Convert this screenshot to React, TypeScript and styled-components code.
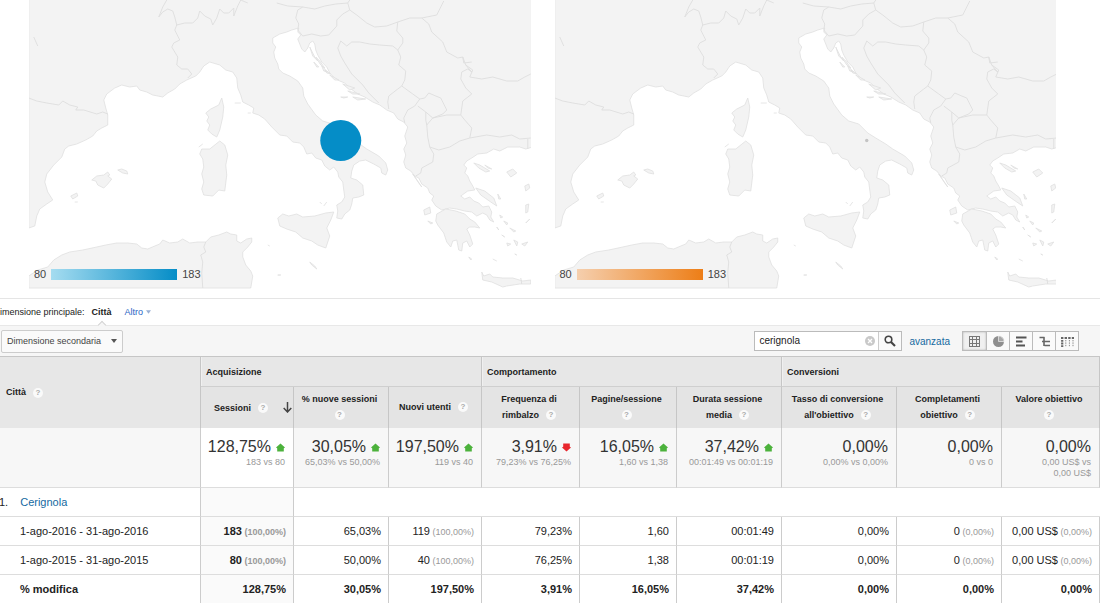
import React, { useId } from 'react';
import styled, { createGlobalStyle, css } from 'styled-components';

const GlobalStyle = createGlobalStyle`
  *, *::before, *::after { box-sizing: border-box; }
  body {
    margin: 0;
    background: #fff;
    color: #222;
    font-family: "Liberation Sans", Arial, sans-serif;
    font-size: 11px;
    overflow-x: hidden;
  }
  button, input, select { font-family: inherit; color: inherit; }
`;

/* ---------- Maps ---------- */

const Maps = styled.section`
  display: grid;
  grid-template-columns: 1fr 1fr;
  gap: 24px;
  height: 298px;
  padding: 0 44px 0 29px;
`;

const MapPanel = styled.figure`
  position: relative;
  margin: 0;
  height: 290px;
`;

const MapSvg = styled.svg`
  display: block;
  width: 100%;
  height: 100%;
`;

const Legend = styled.figcaption`
  position: absolute;
  left: 5px;
  bottom: 10px;
  display: flex;
  align-items: center;
  gap: 5px;
  line-height: 12px;
  color: #444;
`;

const Scale = styled.span<{ $from: string; $to: string }>`
  width: 126px;
  height: 11px;
  background: linear-gradient(to right, ${p => p.$from}, ${p => p.$to});
`;

const LAND = [
  'M29 -2H533V147L526 149L520 147L508 147L500 151L494 149L487 153L478 154L472 158L467 161L464 165L467 168L465 173L468 176L470 181L473 186L475 190L468 191L461 196L465 199L470 197L474 201L479 203L483 207L489 206L492 212L491 217L494 222L490 220L487 215L483 213L477 216L472 212L465 211L457 209L450 208L442 210L436 206L432 200L434 196L430 193L428 188L422 184L419 178L415 176L411 171L406 168L404 162L406 155L404 149L407 143L405 136L408 127L404 122L398 119L394 113L387 110L380 105L373 102L365 97L358 94L350 88L345 83L340 81L335 78L330 73L327 67L322 62L318 55L316 50L315 44L313 41L310 43L308 48L305 52L302 49L300 44L298 39L301 35L298 32L299 28L292 30L287 32L280 34L273 38L273 43L276 47L274 52L275 58L278 64L279 69L283 73L290 76L298 81L303 88L304 96L308 104L316 115L323 121L333 124L338 129L342 133L350 138L360 144L367 149L379 156L386 163L388 170L386 175L382 173L381 168L374 164L366 160L360 161L354 165L352 171L351 178L357 180L363 185L364 195L359 197L353 198L352 204L350 210L345 214L342 219L337 218L338 211L337 205L342 202L345 197L344 190L343 182L339 177L338 172L334 167L330 170L325 166L322 160L316 158L312 153L307 154L304 147L300 143L293 142L287 136L280 135L272 127L265 119L259 115L253 113L254 108L249 105L243 102L241 95L238 88L237 78L233 72L226 70L220 65L210 62L204 66L200 72L196 76L187 80L180 84L175 89L168 93L163 97L153 95L147 92L140 90L137 86L130 87L122 85L115 88L107 94L104 100L106 108L108 115L108 125L102 128L97 131L93 136L86 140L77 144L69 146L65 149L62 157L54 165L47 174L45 182L48 192L53 200L47 204L40 209L37 216L35 226L29 228Z',
  'M222 98L224 107L223 117L220 130L217 137L212 134L208 130L210 125L207 121L209 117L206 113L211 109L219 105Z',
  'M220 141L225 145L228 155L226 165L227 175L225 191L219 190L213 196L204 195L202 189L204 182L202 174L204 167L203 159L200 154L202 149L210 149Z',
  'M278 218L283 214L289 216L297 214L303 217L315 216L326 213L334 212L331 220L327 228L330 236L326 248L318 245L312 241L303 238L296 232L287 229L280 226Z',
  'M437 214L446 209L456 211L465 214L470 219L475 222L480 228L475 227L470 227L467 229L470 235L473 244L470 247L467 241L463 243L462 251L459 250L457 240L453 241L451 247L447 242L444 233L438 225L436 221Z',
  'M482 272L484 276L490 274L493 277L503 278L513 278L523 281L531 280V284L520 284L507 286L503 287L492 282L483 280Z',
  'M92 180L97 176L104 175L108 172L110 175L108 176L112 179L108 184L104 188L98 185L96 181Z',
  'M118 170L122 169L127 171L128 174L123 173Z',
  'M71 196L77 193L78 196L73 199Z',
  'M29 276L38 270L48 267L54 260L62 255L70 252L83 250L97 247L106 245L117 243L128 243L137 244L142 248L148 249L155 246L160 244L163 240L170 243L178 242L183 239L190 243L198 242L206 242L211 237L219 235L227 232L231 234L237 235L237 241L241 243L247 239L252 238L252 242L248 247L243 252L243 257L246 265L251 271L253 276L251 288H29Z',
  'M474 163L480 165L490 171L486 172L479 168Z M485 165L492 169L488 168Z M507 172L513 169L517 173L511 177Z M498 194L501 199L499 199Z M525 186L529 184L530 188L526 191Z M526 205L529 204L528 212L526 213Z M413 174L418 181L422 187L419 183Z M424 210L430 207L431 213L425 215Z M428 221L433 223L431 224Z M476 188L485 191L494 198L497 206L491 202L481 195Z M500 215L503 217L501 218Z M504 221L508 223L507 225Z M510 228L516 231L514 232Z M497 227L499 230Z M502 235L505 237Z M507 243L511 244L508 246Z M522 244L528 242L525 246Z M514 240L518 242L517 246Z M515 254L517 255Z M526 223L530 219Z M469 257L472 259L471 260Z',
  'M310 262L315 266L317 269L312 265Z M278 275L281 275Z M320 202L322 204 M324 206L327 202 M268 245L270 246 M75 202L78 202 M199 147L203 144 M235 103L241 103 M248 113L251 113 M493 259L497 261',
  'M310 47L315 57L318 61L313 56Z M316 57L320 61L325 68L321 65Z M314 62L319 67L317 67Z M322 66L328 72L324 71Z M325 70L331 74L327 73Z M330 75L339 80L335 80Z M343 84L355 88L350 90Z M341 97L348 97L344 98Z M353 97L366 99L358 100Z M348 91L360 94L353 94Z',
];

const BORDERS = [
  'M29 98L37 101L47 103L59 105L63 101L70 105L78 107L76 110L84 110L97 114L103 112L108 114',
  'M188 78L192 74L188 69L182 69L177 65L178 57L172 47L174 43L180 40L175 30L177 25L185 23L193 23L198 18L200 11L205 16L211 19L213 25L217 18L220 9L224 13L229 13L234 8L234 16L238 6L241 0',
  'M177 25L175 17L173 11L168 9L163 12L159 17L163 7L167 0',
  'M241 0L248 3M277 3L288 6L303 7L315 9L325 6L336 4L348 3L350 0M348 3L350 10L357 15L367 23L375 27L387 26L398 22L410 18L422 18L437 15L441 7L444 1',
  'M298 10L296 18L299 24L298 30L303 36L312 34L321 36L329 35L337 26L337 20L343 14L350 10M298 10L303 7',
  'M398 22L397 31L403 38L403 43L398 50L393 46L380 45L370 44L360 42L352 42L347 46L341 41L338 48L341 56L345 63L352 74L363 85L369 93L379 103',
  'M398 50L401 57L399 65L406 71L405 80L402 86L398 89L389 96L388 102L389 109M402 86L413 94L420 99L415 106L408 110L404 118L405 123M420 99L425 98L429 93L436 96L441 98L447 110L443 114L433 118L426 112L418 106',
  'M422 18L429 24L432 32L443 42L447 52L458 58L463 57L466 65L472 72L468 69L462 72L461 79L466 88L472 94L463 101L462 108L461 115L447 115L433 118L427 125L428 137L430 147L439 150L450 147L460 141L470 138L472 128L465 120L461 115M426 112L426 120L427 125',
  'M466 65L473 70L470 77L482 79L493 77L507 81L518 81L525 77L531 74M470 138L487 135L500 137L512 135L520 139L531 138M430 147L434 154L433 162L422 168L421 173L416 176M528 139L528 149',
  'M206 242L204 247L206 252L201 255L203 262L202 273L203 288M34 37L38 46M463 57L464 63L472 62M521 278L522 284',
];

interface MapProps {
  low: string;
  high: string;
  bubble?: string;
  label: string;
}

function RegionMap({ low, high, bubble, label }: MapProps) {
  return (
    <MapPanel>
      <MapSvg viewBox="29 0 502 290" preserveAspectRatio="xMidYMid slice" role="img" aria-label={label}>
        <g fill="#f3f3f3" stroke="#e0e0e0" strokeWidth="0.8" strokeLinejoin="round">
          {LAND.map(d => <path key={d} d={d} />)}
        </g>
        <g fill="none" stroke="#dedede" strokeWidth="0.9" strokeLinejoin="round">
          {BORDERS.map(d => <path key={d} d={d} />)}
        </g>
        {bubble
          ? <circle cx="341" cy="140.5" r="20.5" fill={bubble} />
          : <circle cx="341" cy="140.5" r="1.7" fill="#c4c4c4" />}
      </MapSvg>
      <Legend>
        <span>80</span>
        <Scale $from={low} $to={high} />
        <span>183</span>
      </Legend>
    </MapPanel>
  );
}

/* ---------- Dimension bar and toolbar ---------- */

const DimensionBar = styled.nav`
  display: flex;
  align-items: center;
  height: 27px;
  border-top: 1px solid #e5e5e5;
  font-size: 9px;
`;

const DimensionLabel = styled.span`
  white-space: nowrap;
`;

const CurrentDimension = styled.b`
  position: relative;
  margin-left: 7px;
  &::after {
    content: '';
    position: absolute;
    z-index: 1;
    left: 7px;
    top: 15px;
    width: 6px;
    height: 6px;
    border: 1px solid #d4d4d4;
    border-width: 1px 0 0 1px;
    background: #f6f6f6;
    transform: rotate(45deg);
  }
`;

const MoreButton = styled.button`
  display: flex;
  align-items: center;
  gap: 3px;
  margin-left: 13px;
  padding: 0;
  border: 0;
  background: none;
  color: #2a66c4;
  font-size: 9px;
`;

const Toolbar = styled.div`
  display: flex;
  align-items: center;
  height: 31px;
  padding: 0 21px 0 1px;
  background: #f6f6f6;
  border-top: 1px solid #e8e8e8;
`;

const SelectWrap = styled.span`
  position: relative;
  margin-right: auto;
  svg {
    position: absolute;
    right: 6px;
    top: 9px;
    pointer-events: none;
  }
`;

const SecondarySelect = styled.select`
  appearance: none;
  display: block;
  width: 122px;
  height: 23px;
  padding: 0 0 0 5px;
  border: 1px solid #ccc;
  border-radius: 2px;
  background: #fafafa;
  color: #444;
  font-size: 9px;
`;

const Search = styled.form`
  display: flex;
  width: 148px;
  height: 20px;
  border: 1px solid #bbb;
  background: #fff;
`;

const SearchInput = styled.input`
  flex: 1;
  min-width: 0;
  padding: 0 4px 1px;
  border: 0;
  background: none;
  font-size: 10px;
  outline: 0;
`;

const IconButton = styled.button<{ $width: number; $divided?: boolean }>`
  display: grid;
  place-items: center;
  width: ${p => p.$width}px;
  padding: 0;
  border: 0;
  background: none;
  ${p => p.$divided && css`
    border-left: 1px solid #ccc;
    background: #fafafa;
  `}
`;

const AdvancedLink = styled.a`
  margin: 0 12px 0 7px;
  color: #15699f;
  font-size: 10px;
  text-decoration: none;
`;

const ViewGroup = styled.div`
  display: flex;
  height: 20px;
  border: 1px solid #bbb;
`;

const ViewButton = styled.button<{ $active?: boolean }>`
  display: grid;
  place-items: center;
  width: 23px;
  padding: 0;
  border: 0;
  background: ${p => (p.$active ? '#f0f0f0' : '#fafafa')};
  box-shadow: ${p => (p.$active ? 'inset 0 0 2px #aaa' : 'none')};
  & + & { border-left: 1px solid #bbb; }
`;

const Caret = ({ small }: { small?: boolean }) => (
  <svg width={small ? 5 : 6} height="4" viewBox="0 0 6 4" aria-hidden="true">
    <path d="M0 0H6L3 4Z" fill={small ? '#9ab0d4' : '#555'} />
  </svg>
);

const VIEW_ICONS: { name: string; drawing: React.ReactNode }[] = [
  {
    name: 'Dati',
    drawing: <path d="M1 1.5H12M1 4.5H12M1 8.5H12M1 11.5H12M1.5 1V12M4.5 1V12M8.5 1V12M11.5 1V12" stroke="#777" fill="none" />,
  },
  {
    name: 'Percentuale',
    drawing: (
      <>
        <circle cx="6.5" cy="6.5" r="5.5" fill="#8f8f8f" />
        <path d="M6.5 6.5V1A5.5 5.5 0 0 1 12 6.5Z" fill="#a8a8a8" stroke="#e4e4e4" strokeWidth="0.8" />
      </>
    ),
  },
  { name: 'Rendimento', drawing: <path d="M1 2.5H11.5M1 6.5H7.500M1 10.5H10" stroke="#555" strokeWidth="2.2" fill="none" /> },
  {
    name: 'Confronto',
    drawing: <path d="M1.500 2.5H6.500M4 6.500H12M6.500 10.5H12M6 2V11" stroke="#666" strokeWidth="1.6" fill="none" />,
  },
  {
    name: 'Pivot',
    drawing: (
      <>
        <path d="M0 3H13" stroke="#666" strokeWidth="2" strokeDasharray="2.4 1.2" />
        <path d="M1.200 5V12" stroke="#666" strokeWidth="2.2" strokeDasharray="1.800 0.800" />
        <path d="M4.8 5V12M8.4 5V12M12 5V12" stroke="#8a8a8a" strokeDasharray="1.400 1" />
      </>
    ),
  },
];

/* ---------- Data table ---------- */

const Table = styled.table`
  width: 100%;
  table-layout: fixed;
  border-collapse: separate;
  border-spacing: 0;
  border-top: 1px solid #c6c6c6;
`;

const GroupHead = styled.th`
  height: 30px;
  padding: 0 5px;
  border-right: 1px solid #c6c6c6;
  border-bottom: 1px solid #cfcfcf;
  background: #e7e7e7;
  box-shadow: inset 1px 0 #f0f0f0;
  font-size: 9px;
  text-align: left;
`;

const DimensionHead = styled(GroupHead)`
  padding: 0 6px;
  border-bottom: 0;
  box-shadow: none;
`;

const MetricHead = styled.th`
  height: 41px;
  padding: 0 5px 2px 2px;
  border-right: 1px solid #c6c6c6;
  background: #e4e4e4;
  font-size: 9px;
  line-height: 16px;
  text-align: center;
  white-space: nowrap;
`;

const SortedHead = styled.div`
  display: flex;
  align-items: center;
  justify-content: space-between;
  padding: 2px 0 0 11px;
  margin-right: -4px;
`;

const HelpMark = styled.span<{ $spaced?: boolean }>`
  display: inline-block;
  width: 10px;
  height: 10px;
  margin-left: ${p => (p.$spaced ? 7 : 0)}px;
  border-radius: 50%;
  background: #fafafa;
  color: #aaa;
  font-size: 8px;
  line-height: 10px;
  text-align: center;
  vertical-align: middle;
`;

const SummaryCell = styled.td<{ $sorted?: boolean }>`
  height: 60px;
  padding: 9px 8px 0 0;
  border-right: 1px solid #ccc;
  border-bottom: 1px solid #ddd;
  background: ${p => (p.$sorted ? '#fff' : '#f7f7f7')};
  color: #999;
  font-size: 9px;
  line-height: 11px;
  text-align: right;
  vertical-align: top;
`;

const Change = styled.div`
  display: flex;
  align-items: center;
  justify-content: flex-end;
  gap: 5px;
  color: #333;
  font-size: 16px;
  line-height: 20px;
  white-space: nowrap;
`;

const Row = styled.tr<{ $last?: boolean }>`
  --line: ${p => (p.$last ? '0' : '1px')};
  height: ${p => (p.$last ? 28 : 29)}px;
  font-weight: ${p => (p.$last ? 'bold' : 'normal')};
`;

const NameCell = styled.th`
  padding: 0 0 0 20px;
  border-right: 1px solid #ccc;
  border-bottom: var(--line) solid #ddd;
  font-weight: inherit;
  text-align: left;
  white-space: nowrap;
`;

const RankedName = styled.div`
  display: flex;
  margin-left: -21px;
  gap: 12px;
`;

const CityLink = styled.a`
  color: #15699f;
  text-decoration: none;
`;

const ValueCell = styled.td<{ $sorted?: boolean }>`
  padding: 0 7px 0 0;
  border-right: 1px solid #ccc;
  border-bottom: var(--line) solid #ddd;
  background: ${p => (p.$sorted ? '#fafafa' : '#fff')};
  font-weight: ${p => (p.$sorted ? 'bold' : 'inherit')};
  text-align: right;
  white-space: nowrap;
`;

const EmptyCell = styled.td`
  border-bottom: 1px solid #ddd;
`;

const Share = styled.span`
  color: #999;
  font-size: 9px;
`;

const Trend = ({ down }: { down?: boolean }) => (
  <svg width="9" height="9" viewBox="0 0 9 9" role="img" aria-label={down ? 'In calo' : 'In aumento'}>
    <path
      d={down ? 'M4.5 8.500L0 4.500L1.200 3.800V0.500H7.800V3.800L9 4.500Z' : 'M4.5 0.500L9 4.500L7.800 5.200V8.500H1.200V5.200L0 4.500Z'}
      fill={down ? '#e8262d' : '#4cb23c'}
    />
  </svg>
);

interface Metric {
  head: string[];
  change: string;
  compare: string[];
  trend?: 'up' | 'down';
  current: [string, string?];
  previous: [string, string?];
}

const METRICS: Metric[] = [
  { head: ['Sessioni'], change: '128,75%', compare: ['183 vs 80'], trend: 'up', current: ['183', '(100,00%)'], previous: ['80', '(100,00%)'] },
  { head: ['% nuove sessioni', ''], change: '30,05%', compare: ['65,03% vs 50,00%'], trend: 'up', current: ['65,03%'], previous: ['50,00%'] },
  { head: ['Nuovi utenti'], change: '197,50%', compare: ['119 vs 40'], trend: 'up', current: ['119', '(100,00%)'], previous: ['40', '(100,00%)'] },
  { head: ['Frequenza di', 'rimbalzo'], change: '3,91%', compare: ['79,23% vs 76,25%'], trend: 'down', current: ['79,23%'], previous: ['76,25%'] },
  { head: ['Pagine/sessione', ''], change: '16,05%', compare: ['1,60 vs 1,38'], trend: 'up', current: ['1,60'], previous: ['1,38'] },
  { head: ['Durata sessione', 'media'], change: '37,42%', compare: ['00:01:49 vs 00:01:19'], trend: 'up', current: ['00:01:49'], previous: ['00:01:19'] },
  { head: ['Tasso di conversione', "all'obiettivo"], change: '0,00%', compare: ['0,00% vs 0,00%'], current: ['0,00%'], previous: ['0,00%'] },
  { head: ['Completamenti', 'obiettivo'], change: '0,00%', compare: ['0 vs 0'], current: ['0', '(0,00%)'], previous: ['0', '(0,00%)'] },
  { head: ['Valore obiettivo', ''], change: '0,00%', compare: ['0,00 US$ vs', '0,00 US$'], current: ['0,00 US$', '(0,00%)'], previous: ['0,00 US$', '(0,00%)'] },
];

const COLUMN_WEIGHTS = [201, 93, 95, 93, 98, 97, 105, 115, 105, 98];
const TOTAL_WEIGHT = COLUMN_WEIGHTS.reduce((sum, w) => sum + w, 0);

function HeadText({ lines }: { lines: string[] }) {
  const last = lines[lines.length - 1];
  return (
    <>
      {lines.slice(0, -1).map(line => <div key={line}>{line}</div>)}
      <div>{last}<HelpMark $spaced={last !== ''}>?</HelpMark></div>
    </>
  );
}

function PeriodRow({ name, period }: { name: string; period: 'current' | 'previous' }) {
  return (
    <Row>
      <NameCell scope="row">{name}</NameCell>
      {METRICS.map((m, i) => {
        const [value, share] = m[period];
        return (
          <ValueCell key={m.head[0]} $sorted={i === 0}>
            {value}{share && <Share> {share}</Share>}
          </ValueCell>
        );
      })}
    </Row>
  );
}

export default function App() {
  const searchId = useId();
  return (
    <>
      <GlobalStyle />
      <main>
        <Maps>
          <RegionMap low="#a5dcf0" high="#058dc7" bubble="#058dc7" label="Sessioni per città, agosto 2016" />
          <RegionMap low="#f5cfae" high="#ed7e17" label="Sessioni per città, agosto 2015" />
        </Maps>

        <DimensionBar>
          <DimensionLabel>imensione principale:</DimensionLabel>
          <CurrentDimension>Città</CurrentDimension>
          <MoreButton type="button">Altro <Caret small /></MoreButton>
        </DimensionBar>

        <Toolbar>
          <SelectWrap>
            <SecondarySelect aria-label="Dimensione secondaria">
              <option>Dimensione secondaria</option>
            </SecondarySelect>
            <Caret />
          </SelectWrap>
          <Search role="search" onSubmit={e => e.preventDefault()}>
            <SearchInput id={searchId} type="text" defaultValue="cerignola" aria-label="Cerca" />
            <IconButton type="reset" $width={16} aria-label="Cancella">
              <svg width="10" height="10" viewBox="0 0 10 10">
                <circle cx="5" cy="5" r="5" fill="#c9c9c9" />
                <path d="M3 3L7 7M7 3L3 7" stroke="#fff" strokeWidth="1.3" />
              </svg>
            </IconButton>
            <IconButton type="submit" $width={23} $divided aria-label="Avvia ricerca">
              <svg width="12" height="12" viewBox="0 0 12 12">
                <circle cx="4.5" cy="4.5" r="3.3" fill="none" stroke="#444" strokeWidth="1.6" />
                <path d="M7 7L11 11" stroke="#444" strokeWidth="2.2" />
              </svg>
            </IconButton>
          </Search>
          <AdvancedLink href="#avanzata">avanzata</AdvancedLink>
          <ViewGroup>
            {VIEW_ICONS.map((icon, i) => (
              <ViewButton key={icon.name} type="button" $active={i === 0} aria-label={icon.name}>
                <svg width="13" height="13" viewBox="0 0 13 13">{icon.drawing}</svg>
              </ViewButton>
            ))}
          </ViewGroup>
        </Toolbar>

        <Table>
          <colgroup>
            {COLUMN_WEIGHTS.map((w, i) => <col key={i} style={{ width: `${(w / TOTAL_WEIGHT) * 100}%` }} />)}
          </colgroup>
          <thead>
            <tr>
              <DimensionHead rowSpan={2} scope="col">Città<HelpMark $spaced>?</HelpMark></DimensionHead>
              <GroupHead colSpan={3} scope="colgroup">Acquisizione</GroupHead>
              <GroupHead colSpan={3} scope="colgroup">Comportamento</GroupHead>
              <GroupHead colSpan={3} scope="colgroup">Conversioni</GroupHead>
            </tr>
            <tr>
              {METRICS.map((m, i) => (
                <MetricHead key={m.head[0]} scope="col" aria-sort={i === 0 ? 'descending' : undefined}>
                  {i === 0 ? (
                    <SortedHead>
                      <HeadText lines={m.head} />
                      <svg width="9" height="11" viewBox="0 0 9 11" aria-hidden="true">
                        <path d="M4.5 0V10M0.7 6L4.5 10L8.3 6" fill="none" stroke="#444" strokeWidth="1.5" />
                      </svg>
                    </SortedHead>
                  ) : (
                    <HeadText lines={m.head} />
                  )}
                </MetricHead>
              ))}
            </tr>
          </thead>
          <tbody>
            <tr>
              <SummaryCell />
              {METRICS.map((m, i) => (
                <SummaryCell key={m.head[0]} $sorted={i === 0}>
                  <Change>
                    {m.change}
                    {m.trend && <Trend down={m.trend === 'down'} />}
                  </Change>
                  {m.compare.map(line => <div key={line}>{line}</div>)}
                </SummaryCell>
              ))}
            </tr>
            <Row>
              <NameCell scope="row">
                <RankedName>
                  <span>1.</span>
                  <CityLink href="#cerignola">Cerignola</CityLink>
                </RankedName>
              </NameCell>
              <ValueCell $sorted />
              <EmptyCell colSpan={8} />
            </Row>
            <PeriodRow name="1-ago-2016 - 31-ago-2016" period="current" />
            <PeriodRow name="1-ago-2015 - 31-ago-2015" period="previous" />
            <Row $last>
              <NameCell scope="row">% modifica</NameCell>
              {METRICS.map((m, i) => <ValueCell key={m.head[0]} $sorted={i === 0}>{m.change}</ValueCell>)}
            </Row>
          </tbody>
        </Table>
      </main>
    </>
  );
}
